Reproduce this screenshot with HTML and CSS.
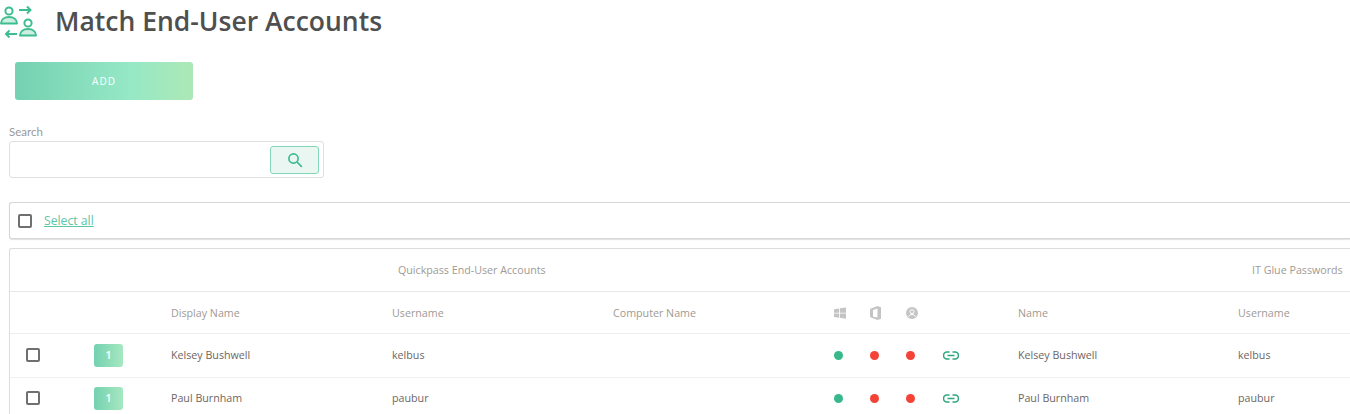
FILE: index.html
```html
<!DOCTYPE html>
<html lang="en">
<head>
<meta charset="utf-8">
<title>Match End-User Accounts</title>
<link rel="stylesheet" href="styles.css">
</head>
<body>
<header class="title-bar">
  <svg class="title-icon" width="38" height="36" viewBox="0 0 38 36" fill="none">
    <circle cx="9" cy="9" r="3.6" stroke="#3dbd90" stroke-width="2"/>
    <path d="M1 21.5c0-4 3.5-6.5 8-6.5s8 2.500 8 6.500z" fill="#cdeee0" stroke="#3dbd90" stroke-width="2" stroke-linejoin="round"/>
    <circle cx="28" cy="21" r="3.600" stroke="#3dbd90" stroke-width="2"/>
    <path d="M20 33.500c0-4 3.500-6.500 8-6.500s8 2.500 8 6.500z" fill="#cdeee0" stroke="#3dbd90" stroke-width="2" stroke-linejoin="round"/>
    <path d="M19 8h11M27 4.500 30.500 8 27 11.500" stroke="#3dbd90" stroke-width="2"/>
    <path d="M17 32H6M9.500 28.500 6 32l3.500 3.500" stroke="#3dbd90" stroke-width="2"/>
  </svg>
  <h1 class="title">Match End-User Accounts</h1>
</header>
<button class="add-btn" type="button">ADD</button>
<section class="search">
  <label class="search-label" for="q">Search</label>
  <div class="search-box">
    <input id="q" class="search-input" type="text">
    <button class="search-btn" type="button" aria-label="Search">
      <svg width="16" height="16" viewBox="0 0 16 16" fill="none" stroke="#3dbd90" stroke-width="1.700"><circle cx="6.500" cy="6.500" r="4.600"/><path d="m10 10 4.800 4.800"/></svg>
    </button>
  </div>
</section>
<div class="select-bar">
  <span class="check"></span>
  <a class="select-link" href="#">Select all</a>
</div>
<section class="table">
  <div class="row group-row">
    <span class="group-a">Quickpass End-User Accounts</span>
    <span class="group-b">IT Glue Passwords</span>
  </div>
  <div class="row head-row">
    <span></span><span></span>
    <span>Display Name</span><span>Username</span><span>Computer Name</span>
    <span class="mark">
      <svg width="12" height="12" viewBox="0 0 12 12" fill="#c4c4c4"><path d="M0 2.200 5 1.400V5.700H0zM5.800 1.300 12 .4V5.700H5.800zM0 6.400H5v4.300l-5-.8zM5.800 6.400H12v5.300l-6.200-.9z"/></svg>
    </span>
    <span class="mark">
      <svg width="12" height="14" viewBox="0 0 12 14" fill="#c4c4c4"><path d="M7.500 0 1 2.500Q0 2.900 0 3.800v6.400q0 .9 1 1.300L7.500 14l3.500-1.200V1.200zM7.500 2.600v8.800L3 10.700V3.900z" fill-rule="evenodd"/></svg>
    </span>
    <span class="mark">
      <svg width="12" height="12" viewBox="0 0 12 12"><circle cx="6" cy="6" r="6" fill="#c4c4c4"/><circle cx="6" cy="4.600" r="2" fill="none" stroke="#fff" stroke-width="1"/><path d="M2.600 9.800C3.200 8 4.500 7.500 6 7.500s2.800.5 3.400 2.300" fill="none" stroke="#fff" stroke-width="1"/></svg>
    </span>
    <span></span>
    <span>Name</span><span>Username</span>
  </div>
  <div class="row data-row">
    <span class="check"></span>
    <span class="badge">1</span>
    <span>Kelsey Bushwell</span><span>kelbus</span><span></span>
    <span class="mark"><i class="dot ok"></i></span>
    <span class="mark"><i class="dot bad"></i></span>
    <span class="mark"><i class="dot bad"></i></span>
    <span class="mark">
      <svg class="link-icon" width="16" height="9" viewBox="0 0 16 9" fill="none" stroke="#2fa67c" stroke-width="1.600"><path d="M6.500 1H4a3.500 3.500 0 0 0 0 7h2.500M9.500 1H12a3.500 3.500 0 0 1 0 7H9.500M4.500 4.500h7"/></svg>
    </span>
    <span>Kelsey Bushwell</span><span>kelbus</span>
  </div>
  <div class="row data-row">
    <span class="check"></span>
    <span class="badge">1</span>
    <span>Paul Burnham</span><span>paubur</span><span></span>
    <span class="mark"><i class="dot ok"></i></span>
    <span class="mark"><i class="dot bad"></i></span>
    <span class="mark"><i class="dot bad"></i></span>
    <span class="mark">
      <svg class="link-icon" width="16" height="9" viewBox="0 0 16 9" fill="none" stroke="#2fa67c" stroke-width="1.600"><path d="M6.500 1H4a3.500 3.500 0 0 0 0 7h2.500M9.500 1H12a3.500 3.500 0 0 1 0 7H9.500M4.500 4.500h7"/></svg>
    </span>
    <span>Paul Burnham</span><span>paubur</span>
  </div>
</section>
</body>
</html>
```
FILE: styles.css
```css
* { box-sizing: border-box; }
html, body { height: 414px; overflow: hidden; }
body {
  margin: 0;
  width: 1350px;
  background: #fff;
  font-family: "Open Sans", sans-serif;
  color: #6e6662;
}
.title-bar {
  display: flex;
  align-items: center;
  gap: 18px;
  height: 44px;
}
.title-icon { flex: none; margin-top: -5px; }
.title {
  margin: -3px 0 0 -1px;
  font-size: 26.500px;
  font-weight: 600;
  line-height: 44px;
  color: #4f4f4f;
}
.add-btn {
  display: block;
  width: 178px;
  height: 38px;
  margin: 18px 0 0 15px;
  border: 0;
  border-radius: 3px;
  background: linear-gradient(90deg, #74d1b1 0%, #96e8c6 65%, #ade8b6 100%);
  color: #fff;
  font: 400 10px "Open Sans", sans-serif;
  letter-spacing: 1px;
}
.search { margin: 23px 0 0 9px; width: 315px; }
.search-label {
  display: block;
  font: 400 11.500px/18px Lato, sans-serif;
  color: #999;
}
.search-box {
  display: flex;
  align-items: center;
  justify-content: space-between;
  height: 37px;
  padding: 0 4px 0 0;
  border: 1px solid #dfdfdf;
  border-radius: 3px;
}
.search-input { flex: 1; min-width: 0; border: 0; outline: 0; background: none; }
.search-btn {
  display: flex;
  align-items: center;
  justify-content: center;
  width: 49px;
  height: 28px;
  padding: 0;
  border: 1px solid #84d8b8;
  border-radius: 3px;
  background: #e9f6f1;
}
.select-bar {
  display: flex;
  align-items: center;
  gap: 12px;
  width: 1341px;
  height: 37px;
  margin: 24px 0 0 9px;
  padding-left: 8px;
  border: 1px solid #d6d6d6;
  border-right: 0;
  border-radius: 3px 0 0 3px;
  box-shadow: 0 1px 1px #e2e2e2;
}
.select-link { font-size: 12.200px; color: #5cc7a2; }
.check {
  display: block;
  width: 14px;
  height: 14px;
  border: 2px solid #6f6f6f;
  border-radius: 2px;
  background: #fff;
}
.table {
  width: 1341px;
  margin: 9px 0 0 9px;
  border: 1px solid #dcdcdc;
  border-right: 0;
  border-radius: 3px 0 0 0;
  font-size: 10.700px;
}
.row {
  display: grid;
  grid-template-columns: 84px 77px 221px 221px 221px 36px 36px 38px 74px 220px 1fr;
  align-items: center;
}
.group-row {
  display: block;
  position: relative;
  height: 43px;
  line-height: 42px;
  color: #a09a94;
  border-bottom: 1px solid #e8e8e8;
}
.group-a { margin-left: 388px; }
.group-b { position: absolute; left: 1242px; top: 0; white-space: nowrap; }
.head-row {
  height: 42px;
  color: #a09a94;
  border-bottom: 1px solid #eeeeee;
}
.data-row {
  height: 44px;
  padding-bottom: 1px;
  border-bottom: 1px solid #f0f0f0;
}
.data-row + .data-row { padding-bottom: 3px; }
.data-row > .check { margin-left: 16px; }
.badge {
  display: flex;
  align-items: center;
  justify-content: center;
  width: 29px;
  height: 23px;
  border-radius: 3px;
  background: linear-gradient(90deg, #74d1b1, #a6e8c0);
  color: #fff;
  font-weight: 600;
}
.mark { display: flex; align-items: center; }
.link-icon { margin-left: -1px; }
.dot { display: block; width: 9px; height: 9px; border-radius: 50%; }
.ok { background: #38b98c; }
.bad { background: #f44336; }
```
